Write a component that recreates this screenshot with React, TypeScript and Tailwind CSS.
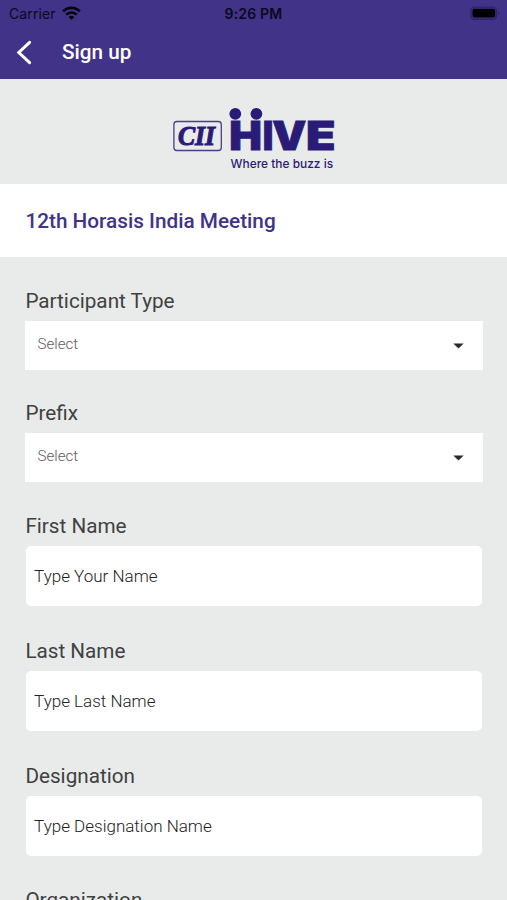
import type { ReactNode } from 'react';

function StatusBar() {
  return (
    <div className="grid h-[27px] grid-cols-3 items-center pl-[9px] pr-[7px] text-[#0b0820]">
      <div className="flex items-center gap-[6px]">
        <span className="font-['Inter'] text-[14px] leading-[27px] tracking-[0.1px]">Carrier</span>
        <svg className="-mt-[2px]" width="19" height="14" viewBox="0 0 19 14" fill="none" stroke="#050312" strokeWidth="2.6">
          <path d="M1.2 5.4 C5.8 0.7 13.2 0.7 17.8 5.4" />
          <path d="M4.2 8.7 C7.2 5.7 11.8 5.7 14.8 8.7" />
          <path d="M9.5 13.8 L6.6 10.9 C8.2 9.4 10.8 9.4 12.4 10.9 Z" fill="#050312" stroke="none" />
        </svg>
      </div>
      <span className="whitespace-nowrap pr-[2px] text-center font-['Inter'] text-[14px] font-semibold leading-[27px] tracking-[0.2px]">
        9:26 PM
      </span>
      <svg className="justify-self-end" width="30" height="15" viewBox="0 0 30 15">
        <rect x="1" y="1.1" width="25.4" height="12.2" rx="3.6" fill="none" stroke="#2d2462" strokeWidth="1.4" />
        <rect x="2.5" y="2.8" width="22.6" height="8.8" rx="1.8" fill="#000" />
        <path d="M27.8 5.2 C29.5 5.8 29.5 8.6 27.8 9.2 Z" fill="#2d2462" />
      </svg>
    </div>
  );
}

function HiveLogo() {
  return (
    <svg width="167" height="66" viewBox="171 106 167 66" fill="#2b1b78">
      <rect x="174.9" y="121.5" width="47.4" height="29" rx="3" fill="none" stroke="#4a3d8c" strokeWidth="1.3" />
      <g
        fontFamily="Liberation Serif, serif" fontSize="27" fontWeight="700" fontStyle="italic"
        stroke="#2b1b78" strokeWidth="1.1"
      >
        <text x="179" y="145.2" textLength="37" lengthAdjust="spacingAndGlyphs">CII</text>
      </g>
      <circle cx="236.3" cy="113.8" r="5.9" />
      <circle cx="257.4" cy="113.8" r="5.9" />
      <text y="150" fontFamily="Inter, sans-serif" fontSize="39.4" fontWeight="900" stroke="#2b1b78" strokeWidth="0.9">
        <tspan x="230.3" textLength="32.6" lengthAdjust="spacingAndGlyphs">H</tspan>
        <tspan x="263.8" textLength="10.6" lengthAdjust="spacingAndGlyphs">I</tspan>
        <tspan x="273.2" textLength="34" lengthAdjust="spacingAndGlyphs">V</tspan>
        <tspan x="307" textLength="29.5" lengthAdjust="spacingAndGlyphs">E</tspan>
      </text>
      <text
        x="231.6" y="168" textLength="102.5" lengthAdjust="spacingAndGlyphs"
        fontFamily="Inter, sans-serif" fontSize="12.2" fontWeight="500"
      >
        Where the buzz is
      </text>
    </svg>
  );
}

function Field({ label, children }: { label: string; children?: ReactNode }) {
  return (
    <div className="flex shrink-0 flex-col gap-[6px]">
      <label className="h-7 pl-[0.4px] text-[20.7px] leading-7 text-[#404141]">{label}</label>
      {children}
    </div>
  );
}

function SelectBox() {
  return (
    <button className="flex h-[49px] w-full items-center justify-between bg-white pl-[12.4px] pr-[19px] text-left">
      <span className="pb-[2px] text-[15.2px] font-light text-[#5c5c5c]">Select</span>
      <svg width="11" height="6" viewBox="0 0 11 6" fill="#2b2b2b">
        <path d="M0.3 0.4 H10.7 L5.5 5.6 Z" />
      </svg>
    </button>
  );
}

function TextBox({ placeholder }: { placeholder: string }) {
  return (
    <input
      className="mb-[1.5px] ml-[0.5px] mr-[0.5px] h-[60px] rounded-[5px] bg-white px-[8.6px] text-[17px] font-light text-[#222] outline-none placeholder:text-[#222] placeholder:opacity-100"
      placeholder={placeholder}
    />
  );
}

export default function App() {
  return (
    <div className="flex h-[900px] w-full flex-col overflow-hidden bg-[#e9ebea] font-['Roboto',sans-serif]">
      <header className="h-[79px] shrink-0 bg-[#413388]">
        <StatusBar />
        <div className="flex h-[50px] items-center pl-[16px]">
          <svg width="16" height="25" viewBox="0 0 16 25" fill="none" stroke="#fff" strokeWidth="3">
            <path d="M13.6 2.3 L2.8 12.5 L13.6 22.7" strokeLinecap="round" strokeLinejoin="miter" />
          </svg>
          <h1 className="ml-[30px] pt-[1px] text-[20.7px] font-medium text-white">Sign up</h1>
        </div>
      </header>
      <div className="flex h-[105px] shrink-0 justify-center pt-[27px]">
        <HiveLogo />
      </div>
      <div className="flex h-[73px] shrink-0 items-center bg-white px-[25.4px] pt-[1.5px]">
        <h2 className="text-[20.75px] font-medium text-[#413388]">12th Horasis India Meeting</h2>
      </div>
      <main className="flex flex-col gap-[29.4px] pl-[25px] pr-[24.5px] pt-[30px]">
        <Field label="Participant Type"><SelectBox /></Field>
        <Field label="Prefix"><SelectBox /></Field>
        <Field label="First Name"><TextBox placeholder="Type Your Name" /></Field>
        <Field label="Last Name"><TextBox placeholder="Type Last Name" /></Field>
        <Field label="Designation"><TextBox placeholder="Type Designation Name" /></Field>
        <Field label="Organization" />
      </main>
    </div>
  );
}
